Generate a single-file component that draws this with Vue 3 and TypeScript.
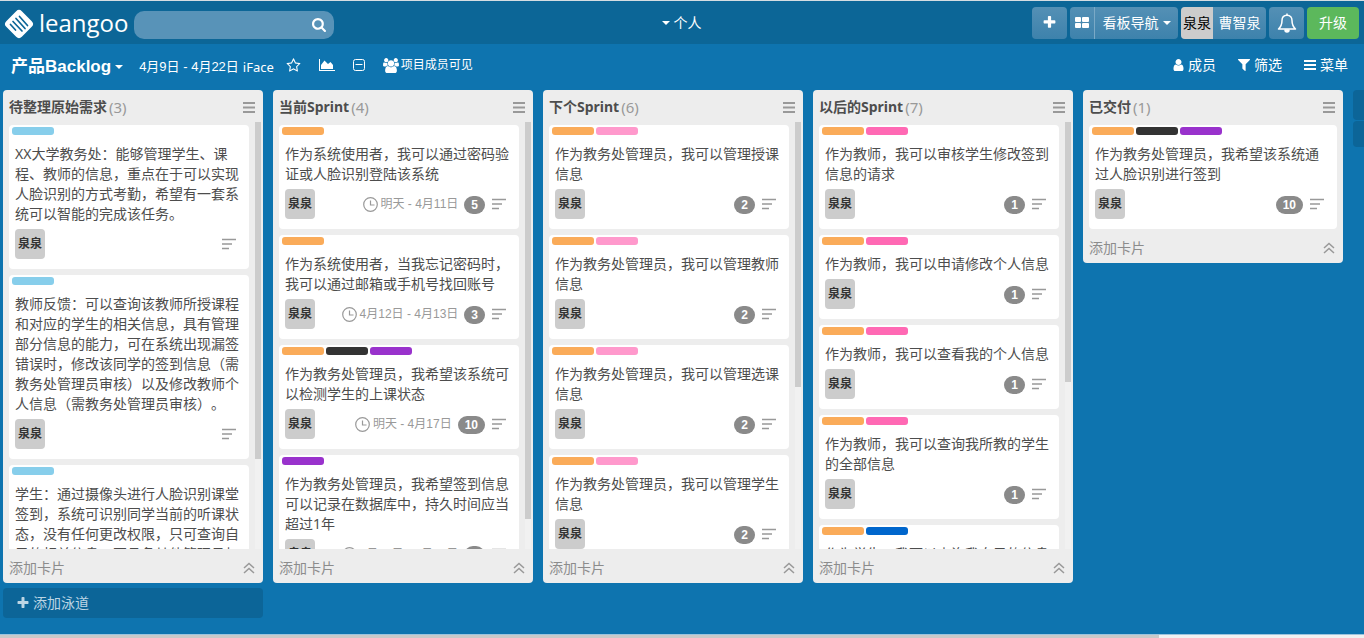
<script setup lang="ts">
interface Card {
  labels: string[]
  text: string
  due?: string
  points?: number
}

interface List {
  title: string
  count: number
  thumb: number
  cards: Card[]
}

const SKY = 'sky'
const ORANGE = 'orange'
const DARK = 'dark'
const PURPLE = 'purple'
const ROSE = 'rose'
const PINK = 'pink'
const BLUE = 'blue'

const lists: List[] = [
  {
    title: '待整理原始需求',
    count: 3,
    thumb: 79,
    cards: [
      { labels: [SKY], text: 'XX大学教务处：能够管理学生、课程、教师的信息，重点在于可以实现人脸识别的方式考勤，希望有一套系统可以智能的完成该任务。' },
      { labels: [SKY], text: '教师反馈：可以查询该教师所授课程和对应的学生的相关信息，具有管理部分信息的能力，可在系统出现漏签错误时，修改该同学的签到信息（需教务处管理员审核）以及修改教师个人信息（需教务处管理员审核）。' },
      { labels: [SKY], text: '学生：通过摄像头进行人脸识别课堂签到，系统可识别同学当前的听课状态，没有任何更改权限，只可查询自己的相关信息，不具备其他管理员权限。' },
    ],
  },
  {
    title: '当前Sprint',
    count: 4,
    thumb: 93,
    cards: [
      { labels: [ORANGE], text: '作为系统使用者，我可以通过密码验证或人脸识别登陆该系统', due: '明天 - 4月11日', points: 5 },
      { labels: [ORANGE], text: '作为系统使用者，当我忘记密码时，我可以通过邮箱或手机号找回账号', due: '4月12日 - 4月13日', points: 3 },
      { labels: [ORANGE, DARK, PURPLE], text: '作为教务处管理员，我希望该系统可以检测学生的上课状态', due: '明天 - 4月17日', points: 10 },
      { labels: [PURPLE], text: '作为教务处管理员，我希望签到信息可以记录在数据库中，持久时间应当超过1年', due: '4月12日 - 4月17日', points: 5 },
    ],
  },
  {
    title: '下个Sprint',
    count: 6,
    thumb: 62,
    cards: [
      { labels: [ORANGE, ROSE], text: '作为教务处管理员，我可以管理授课信息', points: 2 },
      { labels: [ORANGE, ROSE], text: '作为教务处管理员，我可以管理教师信息', points: 2 },
      { labels: [ORANGE, ROSE], text: '作为教务处管理员，我可以管理选课信息', points: 2 },
      { labels: [ORANGE, ROSE], text: '作为教务处管理员，我可以管理学生信息', points: 2 },
    ],
  },
  {
    title: '以后的Sprint',
    count: 7,
    thumb: 61,
    cards: [
      { labels: [ORANGE, PINK], text: '作为教师，我可以审核学生修改签到信息的请求', points: 1 },
      { labels: [ORANGE, PINK], text: '作为教师，我可以申请修改个人信息', points: 1 },
      { labels: [ORANGE, PINK], text: '作为教师，我可以查看我的个人信息', points: 1 },
      { labels: [ORANGE, PINK], text: '作为教师，我可以查询我所教的学生的全部信息', points: 1 },
      { labels: [ORANGE, BLUE], text: '作为学生，我可以查询我自己的信息', points: 1 },
    ],
  },
  {
    title: '已交付',
    count: 1,
    thumb: 0,
    cards: [
      { labels: [ORANGE, DARK, PURPLE], text: '作为教务处管理员，我希望该系统通过人脸识别进行签到', points: 10 },
    ],
  },
]

const plusPath =
  'M1600 736v192q0 40-28 68t-68 28h-416v416q0 40-28 68t-68 28h-192q-40 0-68-28t-28-68v-416h-416q-40 0-68-28t-28-68v-192q0-40 28-68t68-28h416v-416q0-40 28-68t68-28h192q40 0 68 28t28 68v416h416q40 0 68 28t28 68z'
</script>

<template>
  <div class="page">
    <header class="topbar">
      <div class="side">
        <a class="brand" href="#">
          <svg width="30" height="30" viewBox="0 0 30 30" aria-hidden="true">
            <rect x="4" y="4" width="22" height="22" rx="4" fill="#fff" transform="rotate(45 15 15)" />
            <g fill="none" stroke="#0c6697" stroke-width="1.700" stroke-linecap="round">
              <path d="M15.500 7.500l8 9M12 9.500l9 10M9 12.500l9 9.500M6.500 15.500l5 5.500" />
            </g>
          </svg>
          <span>leangoo</span>
        </a>
        <form class="search" role="search" @submit.prevent>
          <input type="text" aria-label="搜索" />
          <button type="submit" aria-label="搜索">
            <svg width="14" height="14" viewBox="64 128 1664 1664" fill="#fff"><path d="M1216 832q0-185-131.500-316.500t-316.500-131.500-316.500 131.500-131.500 316.500 131.500 316.500 316.500 131.500 316.500-131.500 131.500-316.500zm512 832q0 52-38 90t-90 38q-54 0-90-38l-343-342q-179 124-399 124-143 0-273.500-55.500t-225-150-150-225-55.500-273.500 55.500-273.500 150-225 225-150 273.500-55.500 273.500 55.500 225 150 150 225 55.500 273.500q0 220-124 399l343 343q37 37 37 90z" /></svg>
          </button>
        </form>
      </div>
      <button class="scope" type="button"><i class="caret"></i>个人</button>
      <nav class="side actions">
        <button class="btn square" type="button" aria-label="新建">
          <svg width="15" height="15" viewBox="0 0 1792 1792" fill="#fff"><path :d="plusPath" /></svg>
        </button>
        <div class="group">
          <button class="btn grid" type="button" aria-label="看板">
            <svg width="14" height="12" viewBox="0 0 14 12" fill="#fff"><rect width="6" height="5" rx="1" /><rect x="7" width="7" height="5" rx="1" /><rect y="6" width="6" height="5" rx="1" /><rect x="7" y="6" width="7" height="5" rx="1" /></svg>
          </button>
          <button class="btn nav" type="button">看板导航<i class="caret"></i></button>
        </div>
        <button class="btn account" type="button"><span class="me">泉泉</span><span class="name">曹智泉</span></button>
        <button class="btn square" type="button" aria-label="通知">
          <svg width="20" height="20" viewBox="0 0 20 20" fill="none" stroke="#fff" stroke-width="1.500" stroke-linejoin="round"><path d="M10 2.200c-3.400 0-5 2.300-5 5.300 0 3.800-1 6.200-3.500 8.500h17c-2.500-2.300-3.500-4.700-3.500-8.500 0-3-1.600-5.300-5-5.300z" /><path d="M10 2V.5" /><path d="M8 17a2 2 0 0 0 4 0z" fill="#fff" /></svg>
        </button>
        <button class="btn upgrade" type="button">升级</button>
      </nav>
    </header>

    <div class="boardbar">
      <button class="board-name" type="button">产品Backlog<i class="caret"></i></button>
      <span class="range">4月9日 - 4月22日</span>
      <span class="project">iFace</span>
      <div class="tools">
        <button type="button" aria-label="收藏">
          <svg width="15" height="15" viewBox="0 0 1792 1792" fill="#fff"><path d="M1201 1004l306-297-422-62-189-382-189 382-422 62 306 297-73 421 378-199 377 199zm527-357q0 22-26 48l-363 354 86 500q1 7 1 20 0 50-41 50-19 0-40-12l-449-236-449 236q-22 12-40 12-21 0-31.500-14.500t-10.500-35.500q0-6 2-20l86-500-364-354q-25-27-25-48 0-37 56-46l502-73 225-455q19-41 49-41t49 41l225 455 502 73q56 9 56 46z" /></svg>
        </button>
        <button type="button" aria-label="图表">
          <svg width="16" height="12" viewBox="0 0 16 12" fill="#fff"><path d="M0 0h1v11h15v1H0z" /><path d="M2 10V6l3.500-4.500L9 5l2.500-2L14 6v4z" /></svg>
        </button>
        <button type="button" aria-label="折叠">
          <svg width="12" height="12" viewBox="0 0 12 12" fill="none" stroke="#fff"><rect x=".5" y=".5" width="11" height="11" rx="2" /><path d="M2.500 5.500h7" /></svg>
        </button>
        <button class="visibility" type="button">
          <svg width="16" height="15" viewBox="-64 0 1920 1792" fill="#fff"><path d="M529 896q-162 5-265 128h-134q-82 0-138-40.500t-56-118.500q0-353 124-353 6 0 43.500 21t97.500 42.500 119 21.500q67 0 133-23-5 37-5 66 0 139 81 256zm1071 637q0 120-73 189.500t-194 69.500h-874q-121 0-194-69.500t-73-189.500q0-53 3.500-103.500t14-109 26.500-108.500 43-97.500 62-81 85.500-53.500 111.500-20q10 0 43 21.500t73 48 107 48 135 21.500 135-21.500 107-48 73-48 43-21.500q61 0 111.500 20t85.500 53.500 62 81 43 97.500 26.500 108.500 14 109 3.500 103.500zm-1024-1277q0 106-75 181t-181 75-181-75-75-181 75-181 181-75 181 75 75 181zm704 384q0 159-112.500 271.500t-271.500 112.500-271.500-112.500-112.500-271.500 112.500-271.500 271.500-112.500 271.500 112.500 112.500 271.500zm576 225q0 78-56 118.500t-138 40.500h-134q-103-123-265-128 81-117 81-256 0-29-5-66 66 23 133 23 59 0 119-21.500t97.500-42.500 43.500-21q124 0 124 353zm-128-609q0 106-75 181t-181 75-181-75-75-181 75-181 181-75 181 75 75 181z" /></svg>
          项目成员可见
        </button>
      </div>
      <div class="menu">
        <button type="button">
          <svg width="11" height="12" viewBox="192 128 1408 1536" fill="#fff"><path d="M1536 1399q0 109-62.500 187t-150.500 78h-854q-88 0-150.500-78t-62.500-187q0-85 8.500-160.500t31.500-152 58.500-131 94-89 134.500-34.500q131 128 313 128t313-128q76 0 134.500 34.500t94 89 58.500 131 31.500 152 8.500 160.500zm-256-887q0 159-112.500 271.500t-271.500 112.500-271.500-112.500-112.500-271.500 112.500-271.500 271.500-112.500 271.500 112.500 112.500 271.500z" /></svg>
          成员
        </button>
        <button type="button">
          <svg width="12" height="12" viewBox="192 256 1408 1408" fill="#fff"><path d="M1595 295q17 41-14 70l-493 493v742q0 42-39 59-13 5-25 5-27 0-45-19l-256-256q-19-19-19-45v-486l-493-493q-31-29-14-70 17-39 59-39h1280q42 0 59 39z" /></svg>
          筛选
        </button>
        <button type="button">
          <svg width="12" height="10" viewBox="0 0 12 10" fill="#fff"><path d="M0 0h12v2H0zM0 4h12v2H0zM0 8h12v2H0z" /></svg>
          菜单
        </button>
      </div>
    </div>

    <main class="board">
      <div v-for="(list, i) in lists" :key="list.title" class="lane">
        <section class="list">
          <div class="list-head">
            <h2>{{ list.title }}</h2>
            <span class="count">({{ list.count }})</span>
            <button type="button" aria-label="列表菜单">
              <svg width="12" height="11" viewBox="0 0 12 11" fill="#999"><path d="M0 0h12v2H0zM0 4.500h12v2H0zM0 9h12v2H0z" /></svg>
            </button>
          </div>
          <div class="list-body">
            <div class="cards">
              <article v-for="card in list.cards" :key="card.text" class="card">
                <div class="labels"><i v-for="label in card.labels" :key="label" :class="label"></i></div>
                <p>{{ card.text }}</p>
                <div class="meta">
                  <span class="avatar">泉泉</span>
                  <span v-if="card.due" class="due">
                    <svg width="15" height="15" viewBox="0 0 15 15" fill="none" stroke="#999" stroke-width="1.200"><circle cx="7.500" cy="7.500" r="6.800" /><path d="M7.500 3.500v4.500h4" /></svg>
                    {{ card.due }}
                  </span>
                  <span v-if="card.points" class="points">{{ card.points }}</span>
                  <svg class="desc" width="14" height="12" viewBox="0 0 14 12" stroke="#999" stroke-width="1.400"><path d="M0 1.500h14M0 6h10M0 10.500h7" /></svg>
                </div>
              </article>
            </div>
            <div v-if="list.thumb" class="track"><div class="thumb" :style="{ height: list.thumb + '%' }"></div></div>
          </div>
          <div class="list-foot">
            <button type="button">添加卡片</button>
            <button type="button" aria-label="收起">
              <svg width="12" height="12" viewBox="0 0 12 12" fill="none" stroke="#999" stroke-width="1.500"><path d="M1 6l5-4.500L11 6M1 11l5-4.500L11 11" /></svg>
            </button>
          </div>
        </section>
        <button v-if="i === 0" class="add-lane" type="button">
          <svg width="14" height="14" viewBox="0 0 1792 1792" fill="currentColor"><path :d="plusPath" /></svg>
          添加泳道
        </button>
      </div>
      <div class="lane ghost">
        <button type="button" aria-label="添加列表"></button>
        <button type="button" aria-label="添加泳道"></button>
      </div>
    </main>
    <div class="hscroll"><div></div></div>
  </div>
</template>

<style>
html,
body {
  margin: 0;
  overflow: hidden;
}
</style>

<style scoped>
.page {
  display: flex;
  flex-direction: column;
  height: 100vh;
  background: #0e74af;
  color: #fff;
  font-family: "Noto Sans", "Noto Sans CJK SC", sans-serif;
  font-size: 14px;
  line-height: 20px;
  text-spacing-trim: space-all;
}
.page * {
  box-sizing: border-box;
}
button {
  display: flex;
  align-items: center;
  padding: 0;
  border: 0;
  background: none;
  color: inherit;
  font: inherit;
  white-space: nowrap;
}
svg {
  display: block;
  flex: none;
}
.caret {
  border: 4px solid transparent;
  border-top-color: #fff;
  border-bottom: 0;
}
.topbar {
  display: grid;
  grid-template-columns: 1fr auto 1fr;
  align-items: center;
  flex: none;
  height: 44px;
  padding: 0 5px 0 4px;
  border-top: 1px solid #d5dde2;
  background: #0c6697;
}
.side {
  display: flex;
  align-items: center;
}
.brand {
  display: flex;
  align-items: center;
  gap: 5px;
  width: 130px;
  color: #fff;
  font-family: "Open Sans", "Noto Sans", sans-serif;
  font-size: 24px;
  line-height: 32px;
  text-decoration: none;
}
.brand svg {
  margin-top: 2px;
}
.search {
  display: flex;
  align-items: center;
  width: 200px;
  height: 28px;
  margin-top: 4px;
  padding-right: 8px;
  border-radius: 10px;
  background: #5893b8;
}
.search input {
  flex: 1;
  min-width: 0;
  height: 28px;
  padding: 0 10px;
  border: 0;
  outline: 0;
  background: none;
  color: #fff;
  font: inherit;
}
.scope {
  gap: 4px;
}
.actions {
  justify-content: flex-end;
  gap: 3px;
}
.btn {
  justify-content: center;
  height: 32px;
  border-radius: 4px;
  background: linear-gradient(#5490b5, #3d82ac);
}
.square {
  width: 35px;
}
.group {
  display: flex;
}
.grid {
  width: 25px;
  border-right: 1px solid #7aa9c6;
  border-radius: 4px 0 0 4px;
}
.nav {
  gap: 4px;
  width: 83px;
  border-radius: 0 4px 4px 0;
}
.account {
  width: 85px;
  overflow: hidden;
}
.me {
  width: 32px;
  background: #ccc;
  color: #000;
  line-height: 32px;
}
.name {
  flex: 1;
}
.upgrade {
  width: 52px;
  background: #5cb85c;
}
.boardbar {
  display: flex;
  align-items: center;
  flex: none;
  height: 46px;
  padding: 0 16px 0 11px;
}
.board-name {
  gap: 4px;
  font-family: "Liberation Sans", "Noto Sans CJK SC", sans-serif;
  font-size: 17px;
  font-weight: 700;
}
.range {
  margin-left: 16px;
  font-family: "Liberation Sans", "Noto Sans CJK SC", sans-serif;
  font-size: 13px;
}
.project {
  margin-left: 4px;
  font-size: 13px;
}
.tools,
.menu {
  display: flex;
  align-items: center;
  padding-bottom: 4px;
}
.tools {
  gap: 18px;
  margin-left: 12px;
}
.visibility {
  gap: 2px;
  font-size: 12px;
}
.menu {
  gap: 22px;
  margin-left: auto;
}
.menu button {
  gap: 4px;
}
.board {
  display: flex;
  align-items: flex-start;
  flex: 1;
  gap: 10px;
  min-height: 0;
  padding-left: 3px;
  overflow: hidden;
}
.lane {
  flex: none;
  width: 260px;
}
.list {
  display: flex;
  flex-direction: column;
  max-height: calc(100vh - 145px);
  border-radius: 4px;
  background: #ededed;
  color: #4d4d4d;
}
.list-head {
  display: flex;
  align-items: center;
  flex: none;
  gap: 2px;
  height: 32px;
  padding: 2px 8px 0 6px;
}
.list-head h2 {
  margin: 0;
  font-size: 14px;
  font-weight: 700;
}
.list-head button {
  margin-left: auto;
}
.count {
  color: #999;
  font-size: 15px;
}
.list-body {
  display: flex;
  min-height: 0;
}
.cards {
  display: flex;
  flex: 1;
  flex-direction: column;
  gap: 6px;
  padding: 3px 6px 0;
  overflow: hidden;
}
.card {
  flex: none;
  padding: 2px 8px 10px 6px;
  border-radius: 4px;
  background: #fff;
}
.labels {
  display: flex;
  gap: 2px;
  margin-left: -3px;
}
.labels i {
  width: 42px;
  height: 8px;
  border-radius: 3px;
}
.sky { background: #87ceeb; }
.orange { background: #faab59; }
.dark { background: #333; }
.purple { background: #9932cc; }
.rose { background: #ff99cc; }
.pink { background: #ff69b4; }
.blue { background: #0066cc; }
.card p {
  margin: 9px 0 5px;
}
.meta {
  display: flex;
  align-items: center;
  justify-content: flex-end;
  height: 30px;
  padding-right: 5px;
}
.avatar {
  width: 30px;
  margin-right: auto;
  border-radius: 4px;
  background: #ccc;
  color: #333;
  font-size: 12px;
  font-weight: 700;
  line-height: 30px;
  text-align: center;
}
.due {
  display: flex;
  align-items: center;
  gap: 3px;
  color: #999;
  font-family: "Liberation Sans", "Noto Sans CJK SC", sans-serif;
  font-size: 12px;
}
.points {
  height: 18px;
  margin: 2px 0 0 6px;
  padding: 0 7px;
  border-radius: 9px;
  background: #8a8a8a;
  color: #fff;
  font-family: "Liberation Sans", sans-serif;
  font-size: 12px;
  font-weight: 700;
  line-height: 18px;
}
.desc {
  margin-left: 7px;
}
.track {
  flex: none;
  width: 6px;
  margin-right: 2px;
  background: #f1f1f1;
}
.thumb {
  background: #ccc;
}
.list-foot {
  display: flex;
  align-items: center;
  justify-content: space-between;
  flex: none;
  height: 34px;
  padding: 3px 8px 0 6px;
  color: #8c8c8c;
}
.add-lane {
  gap: 3px;
  width: 100%;
  height: 30px;
  margin-top: 5px;
  padding-left: 13px;
  border-radius: 4px;
  background: #0c6598;
  color: #bcd5e4;
}
.ghost button {
  width: 100%;
  height: 30px;
  margin-bottom: 1px;
  border-radius: 4px;
  background: #0c6598;
}
.ghost button + button {
  height: 26px;
}
.hscroll {
  flex: none;
  height: 4px;
  border-top: 1px solid #9cc4dd;
  background: #f1f1f1;
}
.hscroll div {
  width: 85%;
  height: 3px;
  background: #c9c9c9;
}
</style>
